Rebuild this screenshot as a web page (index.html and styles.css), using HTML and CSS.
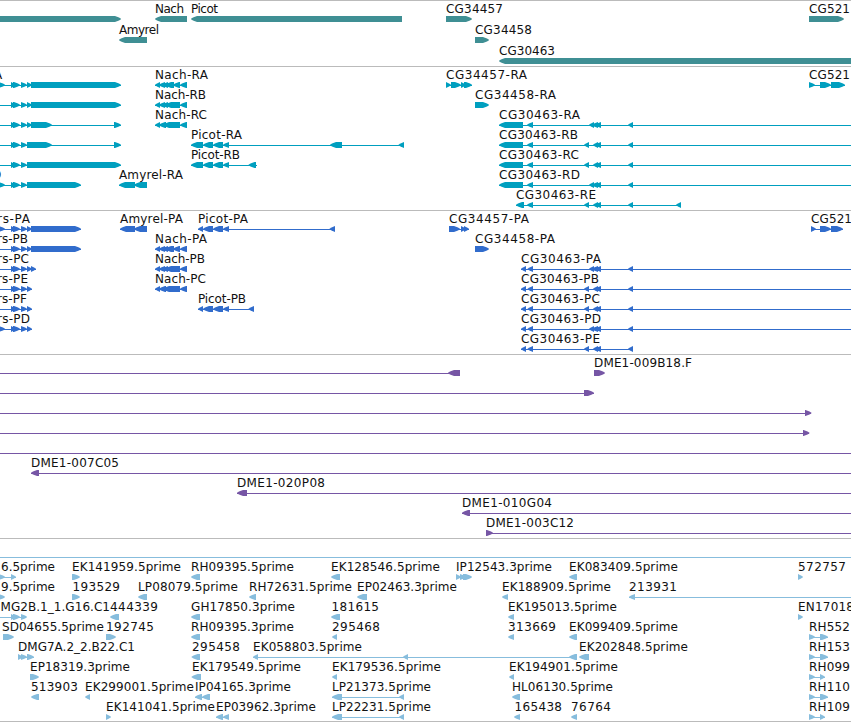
FILE: index.html
```html
<!DOCTYPE html>
<html lang="en">
<head>
  <meta charset="UTF-8">
  <title>Genome Tracks</title>
  <link rel="stylesheet" href="styles.css">
</head>
<body>
  <main class="browser">
    <section class="track genes" id="genes"></section>
    <section class="track transcripts" id="transcripts"></section>
    <section class="track proteins" id="proteins"></section>
    <section class="track bacs" id="bacs"></section>
    <section class="track ests" id="ests"></section>
  </main>
  <script src="tracks.js"></script>
</body>
</html>
```
FILE: styles.css
```css
body {
  margin: 0;
  background-color: #ffffff;
}

.browser {
  display: flex;
  flex-direction: column;
  width: 851px;
  height: 721px;
  overflow: hidden;
  border-bottom: 1px solid #bbbbbb;
}

.track {
  box-sizing: border-box;
  flex: none;
  border-top: 1px solid #bbbbbb;
  overflow: hidden;
}

.track svg {
  display: block;
  width: 851px;
  height: 100%;
}

.track text {
  font-family: "DejaVu Sans", sans-serif;
  font-size: 12px;
  fill: #111111;
}

.track line {
  stroke: currentColor;
  stroke-width: 1px;
  shape-rendering: crispEdges;
}

.track polygon {
  fill: currentColor;
}

.genes {
  height: 66px;
  color: #3f8f94;
}

.transcripts {
  height: 144px;
  color: #009fbf;
}

.proteins {
  height: 144px;
  color: #316ccc;
}

.bacs {
  height: 184px;
  color: #7656a5;
}

.ests {
  height: 183px;
  color: #87bddd;
}
```
FILE: tracks.js
```js
// feature: [label, label start, label end, direction, exons, line]
var NS = 'http://www.w3.org/2000/svg';
var END = 851;
var L = 'left', R = 'right';

var start = [[11, 16], [13, 20], [21, 27]];
var picot = [[203, 213], [213, 223], [223, 229]];
var shortGap = [[589, 594], [592, 598], [595, 601], [628, 633]];
var longGap = [[584, 589], [593, 598], [595, 601], [628, 633]];
var nachA = [[155, 160], [159, 165], [162, 168], [165, 174], [173, 180], [180, 187]];
var nachB = [[155, 160], [159, 165], [162, 168], [165, 180], [180, 187]];
var nachC = [[155, 160], [159, 166], [163, 180], [180, 187]];

var tracks = {
  genes: { pitch: 21, first: 13, rows: [
    [['', 0, 0, R, [[-20, 121]]], ['Nach', 155, 184, L, [[155, 187]]], ['Picot', 191, 218, L, [[191, 402]]],
     ['CG34457', 446, 503, R, [[446, 472]]], ['CG521', 809, 850, R, [[809, 844]]]],
    [['Amyrel', 119, 159, L, [[119, 147]]], ['CG34458', 475, 532, R, [[475, 489]]]],
    [['CG30463', 499, 555, L, [[499, 870]]]]
  ]},
  transcripts: { pitch: 20, first: 13, rows: [
    [['A', -6, 2, R, [[-10, 5], ...start, [27, 32], [31, 121]], [0, 121]],
     ['Nach-RA', 155, 208, L, nachA, [155, 187]],
     ['CG34457-RA', 446, 527, R, [[446, 451], [451, 461], [461, 466], [464, 472]], [446, 472]],
     ['CG521', 809, 850, R, [[809, 815], [820, 831], [831, 845]], [809, 845]]],
    [['', 0, 0, R, [...start, [27, 32], [31, 121]], [0, 121]],
     ['Nach-RB', 155, 206, L, nachB, [155, 187]], ['CG34458-RA', 475, 556, R, [[475, 489]]]],
    [['', 0, 0, R, [...start, [27, 32], [31, 52], [114, 121]], [0, 121]],
     ['Nach-RC', 155, 207, L, nachC, [155, 187]],
     ['CG30463-RA', 499, 580, L, [[499, 523], [527, 533], ...shortGap], [499, END]]],
    [['', 0, 0, R, [...start, [27, 52], [114, 121]], [0, 121]],
     ['Picot-RA', 191, 242, L, [[191, 203], ...picot, [330, 342], [398.5, 404]], [191, 404]],
     ['CG30463-RB', 499, 578, L, [[499, 523], [527, 533], ...longGap], [499, END]]],
    [['', 0, 0, R, [...start, [27, 121]], [0, 121]],
     ['Picot-RB', 191, 240, L, [[191, 203], ...picot, [248.5, 256]], [191, 257]],
     ['CG30463-RC', 499, 579, L, [[499, 523], [527, 533], ...longGap], [499, END]]],
    [['D', -8, 2, R, [[-10, 5], ...start, [27, 81]], [0, 81]],
     ['Amyrel-RA', 119, 183, L, [[119, 135], [134, 147]], [119, 147]],
     ['CG30463-RD', 499, 580, L, [[499, 523], [527, 533], ...shortGap], [499, END]]],
    [['CG30463-RE', 516, 596, L, [[516, 524], [527, 533], ...longGap, [676, 681]], [516, 681]]]
  ]},
  proteins: { pitch: 20, first: 13, rows: [
    [['rs-PA', -3, 30, R, [[-10, 5], ...start, [27, 32], [31, 81]], [0, 81]],
     ['Amyrel-PA', 120, 183, L, [[120, 135], [134, 147]], [120, 147]],
     ['Picot-PA', 198, 248, L, [[198, 203], ...picot, [329.5, 335]], [198, 335]],
     ['CG34457-PA', 449, 529, R, [[449, 460], [461, 466], [464, 469]], [449, 469]],
     ['CG521', 811, 852, R, [[811, 816], [820, 831], [831, 843]], [811, 843]]],
    [['rs-PB', -3, 28, R, [...start, [27, 32], [31, 81]], [0, 81]],
     ['Nach-PA', 155, 207, L, nachA, [155, 187]], ['CG34458-PA', 475, 555, R, [[475, 489]]]],
    [['rs-PC', -3, 29, R, [...start, [27, 32], [31, 36]], [0, 36]],
     ['Nach-PB', 155, 205, L, nachB, [155, 187]],
     ['CG30463-PA', 521, 601, L, [[521, 526], [527.5, 533], ...shortGap], [521, END]]],
    [['rs-PE', -3, 28, R, [...start, [27, 32]], [0, 32]],
     ['Nach-PC', 155, 206, L, nachC, [155, 187]],
     ['CG30463-PB', 521, 599, L, [[521, 526], [527.5, 533], ...longGap], [521, END]]],
    [['rs-PF', -3, 27, R, [...start, [27, 32]], [0, 32]],
     ['Picot-PB', 198, 246, L, [[198, 203], ...picot, [248.5, 254]], [198, 254]],
     ['CG30463-PC', 521, 600, L, [[521, 526], [527.5, 533], ...longGap], [521, END]]],
    [['rs-PD', -3, 30, R, [[-10, 5], ...start, [27, 32]], [0, 32]],
     ['CG30463-PD', 521, 601, L, [[521, 526], [527.5, 533], ...shortGap], [521, END]]],
    [['CG30463-PE', 521, 600, L, [[521, 526], [527.5, 533], ...longGap], [521, 633]]]
  ]},
  bacs: { pitch: 20, first: 13, rows: [
    [['', 0, 0, L, [[448, 460]], [0, 460]], ['DME1-009B18.F', 594, 692, R, [[594, 605]]]],
    [['', 0, 0, R, [[584, 594]], [0, 594]]],
    [['', 0, 0, R, [[805, 811.5]], [0, 811]]],
    [['', 0, 0, R, [[803, 809.5]], [0, 809]]],
    [['', 0, 0, R, [], [0, END]]],
    [['DME1-007C05', 31, 119, L, [[31, 39]], [31, END]]],
    [['DME1-020P08', 237, 325, L, [[237, 247]], [237, END]]],
    [['DME1-010G04', 462, 552, L, [[462, 470]], [462, END]]],
    [['DME1-003C12', 486, 574, R, [[486, 493]], [486, END]]]
  ]},
  ests: { pitch: 20, first: 13, rows: [
    [['', 0, 0, R, [], [0, END]]],
    [['6.5prime', 1, 55, R, [[-1, 5], [11, 16]], [0, 16]], ['EK141959.5prime', 72, 181, R, [[72, 80]]],
     ['RH09395.5prime', 191, 294, L, [[191, 200]]], ['EK128546.5prime', 331, 440, L, [[331, 340]]],
     ['IP12543.3prime', 456, 552, R, [[456, 461], [460, 466], [463, 472]]],
     ['EK083409.5prime', 569, 678, L, [[569, 577]]], ['572757', 798, 846, R, [[798, 803]]]],
    [['9.5prime', 1, 55, R, [[-1, 5]]], ['193529', 72.5, 120, R, [[72, 80]]],
     ['LP08079.5prime', 138, 238, L, [[138, 147]]], ['RH72631.5prime', 249, 352, L, [[249, 256]]],
     ['EP02463.3prime', 357, 457, L, [[357, 367]]], ['EK188909.5prime', 502, 611, L, [[502, 508]]],
     ['213931', 629, 677, L, [[629, 635]], [629, END]]],
    [['MG2B.1_1.G16.C1', 0.5, 110, R, start, [0, 26]], ['444339', 110, 158, L, [[110, 119]]],
     ['GH17850.3prime', 191, 295, L, [[191, 200]]], ['181615', 331.5, 379, L, [[331, 340]]],
     ['EK195013.5prime', 508, 617, L, [[508, 514]]], ['EN17018', 798, 854, R, [[798, 803]]]],
    [['SD04655.5prime', 2, 104, R, [[3, 14]]], ['192745', 106, 154, R, [[106, 116]]],
     ['RH09395.3prime', 191, 294, L, [[191, 200]]], ['295468', 332, 380, L, [[332, 337]]],
     ['313669', 508, 556, L, [[508, 514]]], ['EK099409.5prime', 569, 678, L, [[569, 577]]],
     ['RH552', 809, 850, R, [[809, 815], [820, 828]], [809, 828]]],
    [['DMG7A.2_2.B22.C1', 18, 135, R, [[18, 23], [21, 27], [27, 34]], [18, 34]],
     ['295458', 192, 240, L, [[191.5, 200]]],
     ['EK058803.5prime', 253, 362, L, [[253, 258], [403, 408], [569, 577]], [253, 577]],
     ['EK202848.5prime', 579, 688, L, [[579, 589]]],
     ['RH153', 809, 850, R, [[809, 815], [820, 828]], [809, 828]]],
    [['EP18319.3prime', 30, 130, R, [[30, 39]]], ['EK179549.5prime', 192, 301, L, [[191.5, 201]]],
     ['EK179536.5prime', 332, 441, L, [[332, 337]]], ['EK194901.5prime', 509, 618, L, [[509, 514]]],
     ['RH099', 809, 850, R, [[809, 815], [820, 825]], [809, 825]]],
    [['513903', 31, 78, L, [[31, 39]]], ['EK299001.5prime', 85, 194, L, [[85, 90]]],
     ['IP04165.3prime', 195, 291, L, [[195, 202], [202, 210]], [195, 210]],
     ['LP21373.5prime', 332, 431, L, [[332, 342], [399, 404]], [332, 404]],
     ['HL06130.5prime', 512, 613, L, [[512, 520]]],
     ['RH110', 809, 850, R, [[809, 815], [820, 828]], [809, 828]]],
    [['EK141041.5prime', 106, 215, R, [[106, 111]]],
     ['EP03962.3prime', 216, 316, L, [[216, 223], [223, 229]], [216, 229]],
     ['LP22231.5prime', 332, 431, L, [[332, 342], [399, 404]], [332, 404]],
     ['165438', 514.5, 562, L, [[514, 520]]], ['76764', 571, 611, L, [[571, 577]]],
     ['RH109', 809, 850, R, [[809, 815], [820, 825]], [809, 825]]]
  ]}
};

function add(svg, name, attrs) {
  var el = document.createElementNS(NS, name);
  for (var key in attrs) {
    el.setAttribute(key, attrs[key]);
  }
  svg.appendChild(el);
  return el;
}

// exon box with a pointed end
function arrow(from, to, dir, top) {
  var head = Math.min(6, to - from);
  var tip = dir === L ? from : to;
  var tail = dir === L ? to : from;
  var s = dir === L ? 1 : -1;
  return [[tail, top], [tip + s * head, top], [tip + s * 2, top + 1.6], [tip, top + 2.7],
          [tip, top + 3.3], [tip + s * 2, top + 4.4], [tip + s * head, top + 6], [tail, top + 6]].join(' ');
}

Object.keys(tracks).forEach(function (id) {
  var track = tracks[id];
  var svg = add(document.getElementById(id), 'svg', {});
  track.rows.forEach(function (row, i) {
    // the svg starts under the 1px separator
    var base = track.first + i * track.pitch - 1;
    row.forEach(function (f) {
      if (f[5]) {
        add(svg, 'line', { x1: f[5][0], x2: f[5][1], y1: base + 6.5, y2: base + 6.5 });
      }
      f[4].forEach(function (exon) {
        add(svg, 'polygon', { points: arrow(exon[0], exon[1], f[3], base + 3) });
      });
      if (f[0]) {
        add(svg, 'text', { x: f[1], y: base, textLength: f[2] - f[1] }).textContent = f[0];
      }
    });
  });
});
```
